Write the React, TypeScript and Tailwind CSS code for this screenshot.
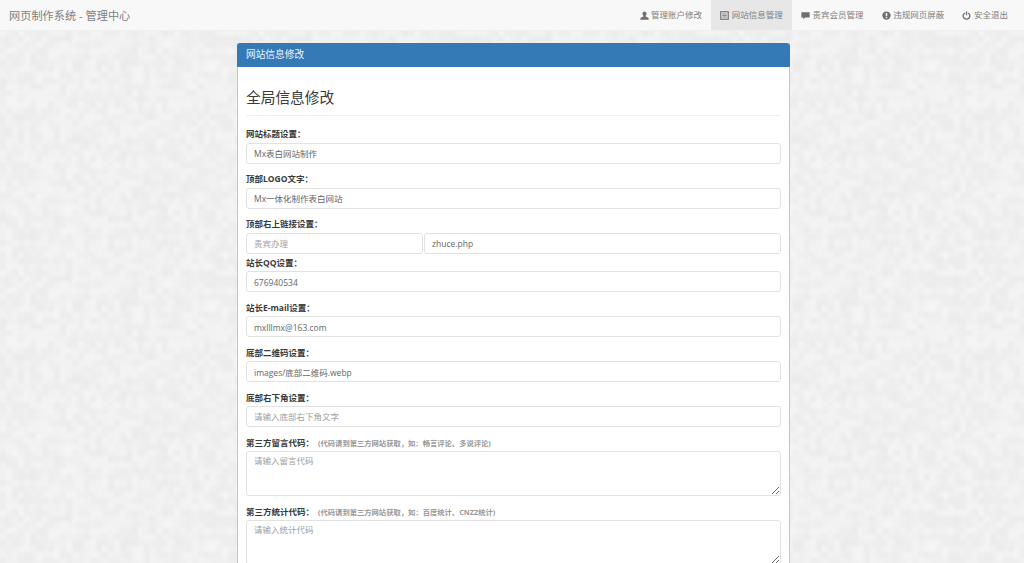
const noiseTiles = (() => {
  // fixed pseudo random mosaic for the page background
  const out: { x: number; y: number; o: number; dark: boolean }[] = [];
  let seed = 17;
  for (let y = 0; y < 40; y++) {
    for (let x = 0; x < 40; x++) {
      seed = (seed * 9301 + 49297) % 233280;
      const r = seed / 233280;
      seed = (seed * 9301 + 49297) % 233280;
      out.push({ x: x * 6, y: y * 6, o: 0.15 + r * 0.85, dark: seed / 233280 > 0.5 });
    }
  }
  return out;
})();

const navLinks = [
  { label: '管理账户修改', icon: 'user' },
  { label: '网站信息管理', icon: 'list', active: true },
  { label: '贵宾会员管理', icon: 'comment' },
  { label: '违规网页屏蔽', icon: 'alert' },
  { label: '安全退出', icon: 'off' },
];

const NavIcon = ({ name }: { name: string }) => {
  if (name === 'user')
    return (
      <svg viewBox="0 0 12 12" className="h-[9px] w-[9px] fill-[#6f6f6f]">
        <path d="M6 .5c1.7 0 2.7 1.3 2.7 3 0 1.2-.5 2.2-1.2 2.8v.9l3 1.3c.7.3 1 .8 1 1.4v1.600H.5V9.900c0-.6.3-1.100 1-1.400l3-1.300v-.9c-.7-.6-1.200-1.600-1.200-2.800 0-1.700 1-3 2.700-3z" />
      </svg>
    );
  if (name === 'list')
    return (
      <svg viewBox="0 0 12 12" className="h-[9px] w-[9px] fill-none stroke-[#6f6f6f]">
        <rect x="1" y="1" width="10" height="10" strokeWidth="1.5" />
        <path d="M3 4h6M3 6h6M3 8h6" strokeWidth="1" />
      </svg>
    );
  if (name === 'comment')
    return (
      <svg viewBox="0 0 12 12" className="h-[9px] w-[9px] fill-[#6f6f6f]">
        <path d="M.5 1.500h11v7H5.500L3 11V8.500H.5z" />
      </svg>
    );
  if (name === 'alert')
    return (
      <svg viewBox="0 0 12 12" className="h-[9px] w-[9px]">
        <circle cx="6" cy="6" r="5.5" fill="#6f6f6f" />
        <rect x="5" y="2.500" width="2" height="4.500" fill="#f8f8f8" />
        <rect x="5" y="8" width="2" height="1.700" fill="#f8f8f8" />
      </svg>
    );
  return (
    <svg viewBox="0 0 12 12" className="h-[9px] w-[9px] fill-none stroke-[#6f6f6f]" strokeWidth="1.8">
      <path d="M3.600 2.600a4.500 4.500 0 1 0 4.800 0" />
      <path d="M6 .6v5" />
    </svg>
  );
};

const fieldClass =
  'block h-[21px] w-full rounded-[3px] border border-[#e2e2e2] bg-white px-[7px] text-[8.5px] text-[#666666] placeholder:text-[#a0a0a0] outline-none';

const labelClass = 'block h-[12px] text-[8.5px] leading-[12px] font-bold text-[#3a3a3a]';

const Field = ({ label, value, placeholder, className, tight, inputClass = '' }: { label: string; value?: string; placeholder?: string; className?: string; tight?: boolean; inputClass?: string }) => (
  <div className={className}>
    <label className={`${labelClass} ${tight ? 'mb-[2px]' : 'mb-[3px]'}`}>{label}</label>
    <input className={`${fieldClass} ${inputClass}`} defaultValue={value} placeholder={placeholder} />
  </div>
);

const CodeField = ({ label, hint, placeholder, className }: { label: string; hint: string; placeholder: string; className?: string }) => (
  <div className={className}>
    <label className={`${labelClass} mb-[2px]`}>
      {label}
      <span className="ml-[4px] text-[7.3px] font-bold text-[#999999]">{hint}</span>
    </label>
    <textarea
      className="block h-[45px] w-full rounded-[3px] border border-[#e2e2e2] bg-white px-[7px] py-[3px] text-[8.5px] leading-[12px] text-[#666666] placeholder:text-[#a0a0a0] outline-none"
      placeholder={placeholder}
    />
  </div>
);

export default function App() {
  return (
    <div className="relative h-[563px] w-[1024px] overflow-hidden bg-[#f0f0f0] font-['Open_Sans','Noto_Sans_CJK_SC',sans-serif]">
      <svg className="absolute inset-0 h-full w-full blur-[1.5px]" aria-hidden="true">
        <defs>
          <pattern id="bg-noise" width="240" height="240" patternUnits="userSpaceOnUse">
            {noiseTiles.map((t, i) => (
              <rect key={i} x={t.x} y={t.y} width="6" height="6" fill={t.dark ? '#ebebeb' : '#f4f4f4'} opacity={t.o} />
            ))}
          </pattern>
        </defs>
        <rect width="100%" height="100%" fill="url(#bg-noise)" />
      </svg>

      <div className="relative">
        <nav className="flex h-[31px] items-stretch border-b border-[#efefef] bg-[#f8f8f8] pl-[9px] pr-[7px]">
          <div className="flex-1 text-[11.2px] leading-[31px] text-[#808080]">网页制作系统 - 管理中心</div>
          <ul className="flex">
            {navLinks.map((l) => (
              <li
                key={l.label}
                className={`flex items-center gap-[2.5px] px-[9.1px] text-[8.5px] text-[#808080] ${l.active ? 'bg-[#e7e7e7]' : ''}`}
              >
                <NavIcon name={l.icon} />
                {l.label}
              </li>
            ))}
          </ul>
        </nav>

        <main className="ml-[237px] mt-[12px] w-[553px] overflow-hidden rounded-t-[3px] bg-white">
          <div className="flex h-[24px] items-center bg-[#337ab7] px-[9px] text-[9.7px] text-[#eef4f9]">网站信息修改</div>
          <div className="border-x border-[#b0cbe0] px-[8px] pt-[22px]">
            <h3 className="h-[27px] border-b border-[#f0f0f0] text-[14.7px] leading-[16px] text-[#3a3a3a]">全局信息修改</h3>
            <Field className="mt-[12px]" inputClass="pb-[1.5px]" label="网站标题设置：" value="Mx表白网站制作" />
            <Field className="mt-[9px]" inputClass="pb-[1.5px]" label="顶部LOGO文字：" value="Mx一体化制作表白网站" />
            <div className="mt-[9px]">
              <label className={`${labelClass} mb-[3px]`}>顶部右上链接设置：</label>
              <div className="flex gap-[1.5px]">
                <input className={`${fieldClass} !w-[176.5px]`} placeholder="贵宾办理" />
                <input className={`${fieldClass} min-w-0 flex-1`} defaultValue="zhuce.php" />
              </div>
            </div>
            <Field className="mt-[3px]" inputClass="pt-[1.5px]" tight label="站长QQ设置：" value="676940534" />
            <Field className="mt-[10px]" inputClass="pt-[1.5px]" tight label="站长E-mail设置：" value="mxlllmx@163.com" />
            <Field className="mt-[10px]" tight label="底部二维码设置：" value="images/底部二维码.webp" />
            <Field className="mt-[10px]" tight label="底部右下角设置：" placeholder="请输入底部右下角文字" />
            <CodeField className="mt-[10px]" label="第三方留言代码：" hint="(代码请到第三方网站获取，如：畅言评论、多说评论)" placeholder="请输入留言代码" />
            <CodeField className="mt-[10px]" label="第三方统计代码：" hint="(代码请到第三方网站获取，如：百度统计、CNZZ统计)" placeholder="请输入统计代码" />
          </div>
        </main>
      </div>
    </div>
  );
}
